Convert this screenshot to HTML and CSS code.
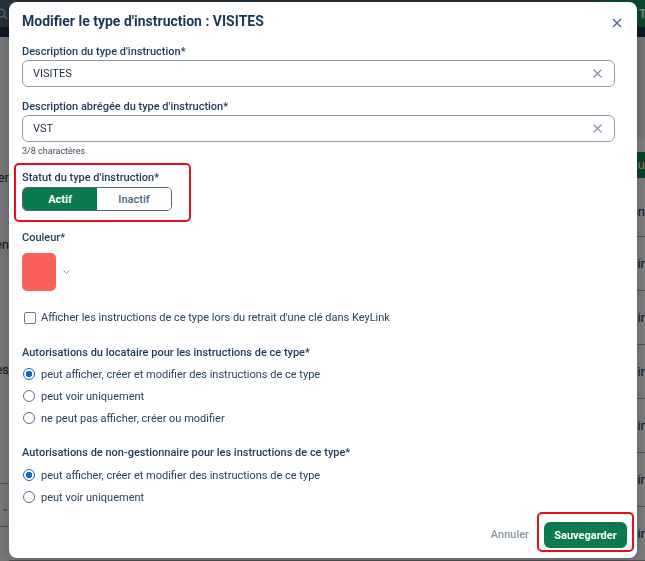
FILE: index.html
```html
<!DOCTYPE html>
<html lang="fr">
<head>
<meta charset="utf-8">
<title>Modifier le type d'instruction : VISITES</title>
<link rel="stylesheet" href="styles.css">
</head>
<body>
<div class="page">
  <header class="topbar">
    <div class="search">
      <svg width="12" height="12" viewBox="0 0 12 12" aria-hidden="true"><circle cx="5" cy="5" r="3.8" fill="none" stroke="currentColor" stroke-width="1.4"/><path d="M8 8 L11 11" stroke="currentColor" stroke-width="1.4"/></svg>
    </div>
    <div class="top-action">Titre</div>
  </header>
  <div class="subbar"></div>
  <div class="main">
    <aside class="sidebar">
      <span class="side-label s1">Filtrer</span>
      <span class="side-label s2">Couleur du lien</span>
      <span class="side-label s3">Types</span>
      <div class="side-select"><span class="tick">ˇ</span></div>
    </aside>
    <section class="card">
      <div class="green-band">Nouveau</div>
      <div class="thead">Action</div>
      <div class="row">Voir</div>
      <div class="row">Voir</div>
      <div class="row">Voir</div>
      <div class="row">Voir</div>
      <div class="row">Voir</div>
      <div class="row">Voir</div>
    </section>
  </div>
</div>

<div class="overlay"></div>

<div class="modal" role="dialog" aria-labelledby="modal-title">
  <div class="modal-header">
    <h1 id="modal-title" class="modal-title">Modifier le type d'instruction : VISITES</h1>
    <button class="close" aria-label="Fermer">
      <svg width="10" height="10" viewBox="0 0 10 10"><path d="M1 1 L9 9 M9 1 L1 9" stroke="#4e6a88" stroke-width="1.5" fill="none"/></svg>
    </button>
  </div>

  <div class="modal-body">
    <div class="field f1">
      <label class="field-label">Description du type d'instruction*</label>
      <div class="input-wrap">
        <input type="text" value="VISITES">
        <button class="clear" aria-label="Effacer"><svg width="9" height="9" viewBox="0 0 9 9"><path d="M0.5 0.5 L8.5 8.5 M8.5 0.5 L0.5 8.5" stroke="#8696a9" stroke-width="1.3" fill="none"/></svg></button>
      </div>
    </div>

    <div class="field f2">
      <label class="field-label">Description abrégée du type d'instruction*</label>
      <div class="input-wrap">
        <input type="text" value="VST">
        <button class="clear" aria-label="Effacer"><svg width="9" height="9" viewBox="0 0 9 9"><path d="M0.5 0.5 L8.5 8.5 M8.5 0.5 L0.5 8.5" stroke="#8696a9" stroke-width="1.3" fill="none"/></svg></button>
      </div>
      <div class="helper">3/8 charactères</div>
    </div>

    <div class="status">
      <span class="field-label status-label">Statut du type d'instruction*</span>
      <div class="toggle">
        <button class="seg on">Actif</button>
        <button class="seg off">Inactif</button>
      </div>
    </div>

    <div class="color-field">
      <span class="field-label color-label">Couleur*</span>
      <div class="swatch-row">
        <div class="swatch"></div>
        <svg class="chev" width="7" height="4" viewBox="0 0 7 4"><path d="M0.5 0.5 L3.5 3.5 L6.5 0.5" stroke="#8a96a3" stroke-width="1" fill="none"/></svg>
      </div>
    </div>

    <label class="check-row">
      <input type="checkbox" class="cb">
      <span>Afficher les instructions de ce type lors du retrait d'une clé dans KeyLink</span>
    </label>

    <div class="group g1">
      <span class="field-label group-label">Autorisations du locataire pour les instructions de ce type*</span>
      <label class="radio-row"><input type="radio" name="loc" class="rd" checked><span>peut afficher, créer et modifier des instructions de ce type</span></label>
      <label class="radio-row"><input type="radio" name="loc" class="rd"><span>peut voir uniquement</span></label>
      <label class="radio-row"><input type="radio" name="loc" class="rd"><span>ne peut pas afficher, créer ou modifier</span></label>
    </div>

    <div class="group g2">
      <span class="field-label group-label">Autorisations de non-gestionnaire pour les instructions de ce type*</span>
      <label class="radio-row"><input type="radio" name="ng" class="rd" checked><span>peut afficher, créer et modifier des instructions de ce type</span></label>
      <label class="radio-row"><input type="radio" name="ng" class="rd"><span>peut voir uniquement</span></label>
    </div>
  </div>

  <div class="modal-footer">
    <button class="cancel">Annuler</button>
    <div class="save-wrap"><button class="save">Sauvegarder</button></div>
  </div>
</div>
</body>
</html>
```

FILE: styles.css
```css
* { box-sizing: border-box; }
html, body { margin: 0; height: 100%; }
body {
  font-family: Roboto, "Noto Sans", sans-serif;
  background: #f0f2f4;
  overflow: hidden;
  color: #1d3a5c;
}

/* background page */
.page { height: 100vh; display: flex; flex-direction: column; }
.topbar {
  flex: none; height: 27px; background: #4f6578;
  display: flex; align-items: center; justify-content: space-between;
}
.search { margin-left: -4px; display: flex; color: #c3cdd6; }
.top-action {
  height: 27px; width: 80px; margin-right: -34px; padding-left: 40px;
  background: #178f5e; color: #fff; font-size: 12px; font-weight: 700;
  display: flex; align-items: center; white-space: nowrap; overflow: hidden;
}
.subbar { flex: none; height: 10px; background: #1b3450; }
.main { flex: 1; display: flex; }
.sidebar {
  width: 9px; flex: none; display: flex; flex-direction: column; align-items: flex-end;
  font-size: 13px; line-height: 14px; color: #333;
}
.side-label { white-space: nowrap; }
.s1 { margin-top: 134px; }
.s2 { margin-top: 53px; }
.s3 { margin-top: 111px; }
.side-select {
  margin-top: 106px; width: 40px; height: 44px; flex: none;
  border-top: 1px solid #aaa; border-bottom: 1px solid #aaa;
  display: flex; align-items: flex-end; justify-content: flex-end; padding: 0 1px 4px 0;
  color: #555;
}
.card {
  flex: 1; margin-top: 103px; background: #fff; padding-top: 12px;
  display: flex; flex-direction: column; align-items: stretch;
  font-size: 13px; color: #1f3a5a; text-align: right;
}
.green-band { height: 26px; background: #168a52; color: #fff; line-height: 26px; margin-right: -20px; padding-right: 20px; }
.thead { margin-top: 9px; height: 50px; line-height: 50px; border-bottom: 1px solid #aaa; color: #333; }
.row { height: 54px; line-height: 54px; border-bottom: 1px solid #aaa; }

.overlay { position: fixed; inset: 0; background: rgba(0, 0, 0, 0.5); }

/* modal */
.modal {
  position: fixed; left: 9px; top: 2px; width: 628px; height: 556px;
  background: #fff; border-radius: 8px;
  display: flex; flex-direction: column;
  box-shadow: 0 4px 16px rgba(0, 0, 0, 0.25);
}
.modal-header {
  height: 29px; padding: 9px 15px 0 13px;
  display: flex; justify-content: space-between; align-items: center;
}
.modal-title {
  margin: 0; font-size: 14px; line-height: 20px; font-weight: 700; color: #1b3756;
}
.close {
  border: 0; background: none; padding: 0; margin-top: 4px;
  width: 10px; height: 10px; display: flex; cursor: pointer;
}

.modal-body { padding: 0 22px 0 13px; }
.field-label {
  display: block; font-size: 11px; line-height: 14px; font-weight: 500;
  color: #1d3a5c; margin-bottom: 1px;
}
.f1 { margin-top: 14px; }
.f2 { margin-top: 13px; }
.input-wrap {
  display: flex; align-items: center; height: 27px;
  border: 1px solid #8f9db0; border-radius: 6px; padding: 0 12px 0 10px;
}
.input-wrap input {
  flex: 1; border: 0; outline: 0; padding: 0; background: transparent;
  font-family: inherit; font-size: 11px; color: #1f2d3d;
}
.clear { border: 0; background: none; padding: 0; width: 9px; height: 9px; display: flex; }
.helper { margin-top: 3px; font-size: 9px; line-height: 12px; color: #3c4a5a; }

.status {
  width: 177px; margin: 6px 0 0 -8px;
  border: 2px solid #e6101c; border-radius: 5px;
  padding: 6px 17px 9px 6px;
}
.status-label { margin-bottom: 2px; }
.toggle {
  display: flex; width: 150px; height: 24px;
  border: 1px solid #4d6580; border-radius: 5px; overflow: hidden;
}
.seg { flex: 1; border: 0; padding: 0; font-family: inherit; font-size: 11px; }
.seg.on { background: #0b7a4f; color: #fff; font-weight: 700; }
.seg.off { background: #fff; color: #4d6580; font-weight: 500; }

.color-field { margin-top: 9px; }
.color-label { margin-bottom: 8px; }
.swatch-row { display: flex; align-items: center; gap: 7px; }
.swatch { width: 34px; height: 38px; border-radius: 5px; background: #fa605b; }

.check-row {
  margin-top: 20px; display: flex; align-items: center; gap: 5px;
  font-size: 11px; line-height: 14px; color: #2a3f58;
}
.cb {
  appearance: none; margin: 0 0 0 2px; width: 12px; height: 12px;
  border: 1.5px solid #6b7b8e; border-radius: 2px; background: #fff;
}

.g1 { margin-top: 21px; }
.g1 .group-label { margin-bottom: 3px; }
.g2 { margin-top: 17px; }
.g2 .group-label { margin-bottom: 4px; }
.radio-row {
  height: 22px; display: flex; align-items: center; gap: 6px;
  font-size: 11px; color: #2a3f58;
}
.rd {
  appearance: none; margin: 0 0 0 1px; width: 12px; height: 12px; flex: none;
  border: 1.3px solid #5f6b7a; border-radius: 50%; background: #fff;
}
.rd:checked {
  border: 1.5px solid #1668c4;
  background: radial-gradient(circle, #1668c4 0 3px, #fff 3.5px);
}

.modal-footer {
  margin-top: auto; display: flex; justify-content: flex-end; align-items: center;
  gap: 8px; padding: 0 3px 6px 0;
}
.cancel {
  border: 0; background: none; padding: 0; font-family: inherit;
  font-size: 11px; font-weight: 500; color: #8a96a4; margin-top: 4px;
}
.save-wrap { border: 2px solid #e6101c; border-radius: 5px; padding: 8px 5px 2px; }
.save {
  display: block; width: 83px; height: 26px; border: 0; border-radius: 6px;
  background: #0b7a4f; color: #fff; font-family: inherit; font-size: 11px; font-weight: 700;
}
```
